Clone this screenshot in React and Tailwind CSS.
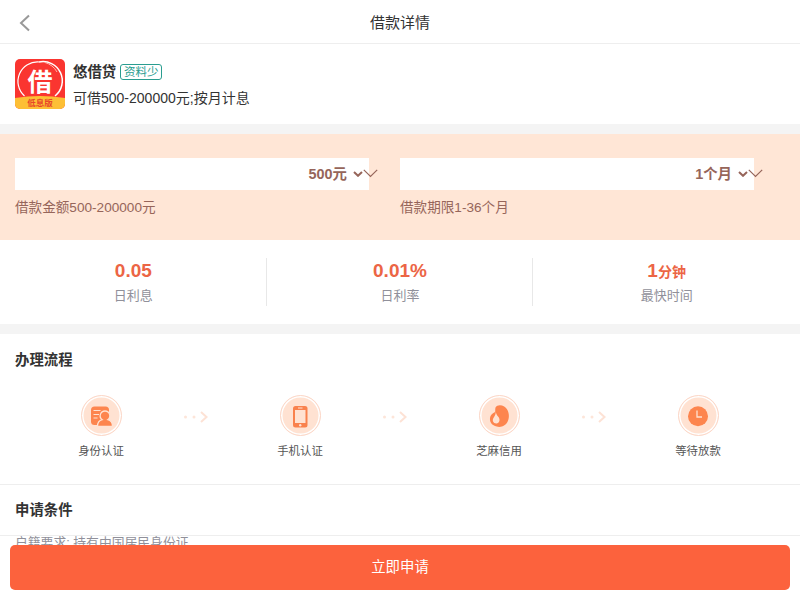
import { Fragment } from 'react'

const STATS = [
  { value: '0.05', unit: '', label: '日利息' },
  { value: '0.01%', unit: '', label: '日利率' },
  { value: '1', unit: '分钟', label: '最快时间' },
]

const STEPS = [
  { label: '身份认证', icon: IdentityIcon },
  { label: '手机认证', icon: PhoneIcon },
  { label: '芝麻信用', icon: CreditIcon },
  { label: '等待放款', icon: ClockIcon },
]

function Logo() {
  return (
    <svg width="50" height="50" viewBox="0 0 50 50" className="shrink-0 rounded-[5px]">
      <rect width="50" height="50" fill="#fa3530" />
      <path d="M9.500 37A19.500 19.500 0 0 1 24 3" fill="none" stroke="#fff" strokeWidth="1.200" />
      <path d="M24 3A19.300 19.300 0 0 1 40 37" fill="none" stroke="#fff" strokeWidth="1.500" />
      <path d="M30 3.500A20 20 0 0 1 42 13" fill="none" stroke="#ffb5aa" strokeWidth="1" />
      <text x="25" y="31.500" textAnchor="middle" fontSize="25" fontWeight="700" fill="#fff">借</text>
      <path d="M0 39Q25 35 50 39V50H0Z" fill="#fdbf35" />
      <text x="25" y="46.500" textAnchor="middle" fontSize="8.500" fontWeight="700" fill="#e8472a">低息版</text>
    </svg>
  )
}

function IdentityIcon() {
  return (
    <svg width="40" height="40" viewBox="0 0 40 40" className="shrink-0">
      <rect x="10" y="10.500" width="18" height="18.500" rx="3.500" fill="#fd854e" />
      <path d="M12.500 14.500h7M12.500 18.500h5.500M12.500 22h4" stroke="#ffe2d2" strokeWidth="1.200" />
      <path
        d="M24 15a4.800 4.800 0 0 1 2.800 8.700c3.300.8 4.700 2.800 4.700 6.800h-15c0-4 1.400-6 4.700-6.800a4.800 4.800 0 0 1 2.800-8.700Z"
        fill="#fd854e"
        stroke="#ffe2d2"
        strokeWidth="1.300"
      />
    </svg>
  )
}

function PhoneIcon() {
  return (
    <svg width="40" height="40" viewBox="0 0 40 40" className="shrink-0">
      <rect x="13" y="10" width="14.500" height="21.500" rx="2.500" fill="#f9814d" />
      <rect x="15" y="14" width="10.500" height="13" fill="#ffe2d2" />
      <path d="M18 12h4.500" stroke="#ffe2d2" />
      <circle cx="20.200" cy="29.200" r="1.200" fill="#ffe2d2" />
    </svg>
  )
}

function CreditIcon() {
  return (
    <svg width="40" height="40" viewBox="0 0 40 40" className="shrink-0">
      <path
        d="M16.500 11.500c1.500-2.700 5.500-3 8.700-1C29.800 13.300 31 20 29 24.800c-2 4.900-6.500 6.900-11.300 5.800C13 29.500 10.500 26 11 22c.4-3 2.300-4.600 4.700-5.800 1-.6.2-2.600.8-4.700Z"
        fill="#fd854e"
      />
      <path
        d="M16.800 14.500c-.1 3 1 4.500 2.500 6.300 2.300 2.700 1.200 6.500-1.900 6.600-3.200.1-4.600-3-2.800-5.700 1.600-2.400 2.400-3.900 2.200-7.200Z"
        fill="#ffe2d2"
      />
    </svg>
  )
}

function ClockIcon() {
  return (
    <svg width="40" height="40" viewBox="0 0 40 40" className="shrink-0">
      <circle cx="20" cy="20.200" r="10" fill="#fd854e" />
      <path d="M19 14.500v6.500h5" fill="none" stroke="#ffe2d2" strokeWidth="1.300" />
    </svg>
  )
}

function StepArrow() {
  return (
    <svg width="26" height="14" viewBox="0 0 26 14">
      <circle cx="2.500" cy="7" r="1.500" fill="#fde5d9" />
      <circle cx="11" cy="7" r="1.500" fill="#fde5d9" />
      <path d="M18 2l5.500 5-5.500 5" fill="none" stroke="#fde2d5" strokeWidth="2" />
    </svg>
  )
}

function Field({ value, hint }) {
  return (
    <div className="w-[385px]">
      <div className="relative flex h-8 w-[354px] items-center justify-end bg-white pr-[6px] text-[14.4px] font-bold text-[#96655a]">
        <span className="pt-[2px]">{value}</span>
        <svg width="10" height="6" viewBox="0 0 10 6" className="ml-[6px]">
          <path d="M1 1l4 3.800L9 1" fill="none" stroke="#96655a" strokeWidth="2" />
        </svg>
        {/* overhangs the edge of the input */}
        <svg width="15" height="9" viewBox="0 0 15 9" className="absolute -right-[9px] top-[11px]">
          <path d="M.8 .8l6.700 6.700L14.200 .8" fill="none" stroke="#96655a" strokeWidth="1.200" />
        </svg>
      </div>
      <p className="mt-2 text-[13.6px] leading-5 text-[#96655a]">{hint}</p>
    </div>
  )
}

export default function App() {
  return (
    <div className="relative h-[600px] overflow-hidden bg-white font-['Liberation_Sans','Noto_Sans_CJK_SC',sans-serif] text-[#333]">
      {/* Header */}
      <header className="grid h-11 grid-cols-[60px_1fr_60px] items-center border-b border-[#eee] pt-[2px]">
        <svg width="12" height="18" viewBox="0 0 12 18" className="ml-[19px]">
          <path d="M10 1.500L2 9l8 7.500" fill="none" stroke="#999" strokeWidth="2" />
        </svg>
        <h1 className="pt-[2px] text-center text-[15px]">借款详情</h1>
      </header>

      {/* Product */}
      <section className="flex h-20 items-start gap-2 px-[15px] pt-[15px]">
        <Logo />
        <div>
          <div className="flex h-[26px] items-center">
            <h2 className="pt-px text-[14.4px] font-bold">悠借贷</h2>
            <span className="ml-1 flex h-4 w-[42px] items-center justify-center rounded-[3px] border border-[#2a9d90] pt-px text-[11.500px] text-[#2a9d90]">
              资料少
            </span>
          </div>
          <p className="mt-[3px] text-[14px] leading-5">可借500-200000元;按月计息</p>
        </div>
      </section>

      <div className="h-[10px] bg-[#f4f4f4]" />

      {/* Amount and term */}
      <section className="flex h-[106px] bg-[#ffe6d6] pl-[15px] pt-6">
        <Field value="500元" hint="借款金额500-200000元" />
        <Field value="1个月" hint="借款期限1-36个月" />
      </section>

      {/* Rates */}
      <section className="grid h-[84px] grid-cols-3 pt-[18px]">
        {STATS.map((s, i) => (
          <div
            key={s.label}
            className={`flex h-12 flex-col items-center ${i < 2 ? 'border-r border-[#e8e8e8] pl-px' : ''}`}
          >
            <p className="text-[19px] leading-[26px] font-bold text-[#ec6545]">
              {s.value}
              <span className="text-[14px]">{s.unit}</span>
            </p>
            <p className="mt-px text-[13px] leading-5 text-[#90909a]">{s.label}</p>
          </div>
        ))}
      </section>

      <div className="h-[10px] bg-[#f4f4f4]" />

      {/* Process */}
      <section className="h-[151px] border-b border-[#eee]">
        <h3 className="px-[15px] pt-[15px] text-[14.4px] leading-[22px] font-bold">办理流程</h3>
        <div className="mt-[24px] flex pl-[53px]">
          {STEPS.map(({ label, icon: Icon }, i) => (
            <Fragment key={label}>
              <div className="flex w-24 flex-col items-center">
                <div className="flex size-[41px] items-center justify-center rounded-full border border-[#fcd8c9] bg-[#ffe2d2] shadow-[inset_0_0_0_1.500px_#fff]">
                  <Icon />
                </div>
                <p className="mt-[5px] text-[11.4px] leading-5 text-[#555]">{label}</p>
              </div>
              {i < STEPS.length - 1 && (
                <div className="flex h-[41px] w-[103px] items-center justify-center pr-[9px] pt-[2px]">
                  <StepArrow />
                </div>
              )}
            </Fragment>
          ))}
        </div>
      </section>

      {/* Conditions */}
      <section>
        <h3 className="h-[51px] border-b border-[#eee] px-[15px] text-[14.4px] leading-[51px] font-bold">申请条件</h3>
        <p className="px-[15px] text-[12.8px] leading-[14px] text-[#90909a]">户籍要求: 持有中国居民身份证</p>
      </section>

      <button className="absolute inset-x-[10px] bottom-[10px] h-[45px] rounded-[5px] bg-[#fc623d] text-[14.4px] text-white">
        立即申请
      </button>
    </div>
  )
}
